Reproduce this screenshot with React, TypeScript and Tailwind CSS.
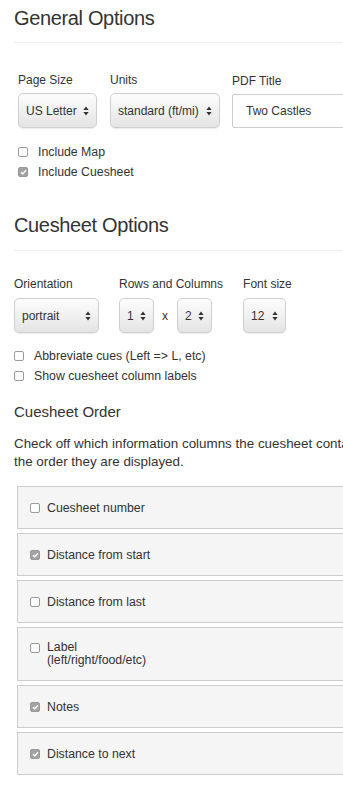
import React from "react";

const font = { fontFamily: '"Liberation Sans", Arial, sans-serif' };

function Arrows() {
  return (
    <svg width="6" height="10" viewBox="0 0 6 10" className="shrink-0">
      <path d="M3 0.5 L5.6 4 L0.4 4 Z" fill="#333" />
      <path d="M3 9.5 L5.6 6 L0.4 6 Z" fill="#333" />
    </svg>
  );
}

function Select({ value, width }: { value: string; width: string }) {
  return (
    <div
      className={`${width} h-[35px] rounded-[5px] border border-[#cfcfcf] bg-gradient-to-b from-[#fdfdfd] to-[#e4e4e4] shadow-[0_1px_1px_rgba(0,0,0,0.08)] flex items-center justify-between pl-[7px] pr-[7px] text-[12px] text-[#333]`}
    >
      <span className="whitespace-nowrap">{value}</span>
      <Arrows />
    </div>
  );
}

function Check({ checked }: { checked?: boolean }) {
  if (checked) {
    return (
      <span className="w-[10px] h-[10px] rounded-[2px] bg-[#a3a3a3] border border-[#999] flex items-center justify-center shrink-0">
        <svg width="7" height="6" viewBox="0 0 7 6">
          <path d="M1 3.2 L2.8 4.8 L6 1.2" stroke="#fff" strokeWidth="1.3" fill="none" />
        </svg>
      </span>
    );
  }
  return <span className="block w-[10px] h-[10px] rounded-[2px] bg-white border border-[#9a9a9a] shrink-0" />;
}

function CheckRow({ label, checked }: { label: string; checked?: boolean }) {
  return (
    <div className="flex items-center h-[20px] text-[12.3px] text-[#333]">
      <Check checked={checked} />
      <span className="ml-[10px] whitespace-nowrap">{label}</span>
    </div>
  );
}

function Item({ children, checked, tall }: { children: React.ReactNode; checked?: boolean; tall?: boolean }) {
  return (
    <div
      className={`${tall ? "h-[54px]" : "h-[43px]"} flex items-center border border-[#cccccc] bg-[#f5f5f5] pl-[12px] text-[12.3px] text-[#333]`}
    >
      <div className={`flex ${tall ? "items-start" : "items-center"}`}>
        <div className={tall ? "mt-[2px]" : ""}>
          <Check checked={checked} />
        </div>
        <div className={`ml-[7px] ${tall ? "leading-[13px]" : "leading-[14px]"}`}>{children}</div>
      </div>
    </div>
  );
}

export default function App() {
  return (
    <div className="w-[343px] h-[788px] overflow-hidden bg-white" style={font}>
      <div className="w-[420px] pl-[14px] pt-[6px]">
        <h1 className="text-[20px] leading-[24px] tracking-[-0.35px] text-[#333]">General Options</h1>
        <div className="mt-[12px] h-px bg-[#eeeeee]" />

        <div className="ml-[4px] mt-[30px] flex">
          <div className="flex flex-col">
            <div className="text-[12px] leading-[14px] text-[#333] h-[14px]">Page Size</div>
            <div className="mt-[6px]">
              <Select value="US Letter" width="w-[79px]" />
            </div>
          </div>
          <div className="flex flex-col ml-[13px]">
            <div className="text-[12px] leading-[14px] text-[#333] h-[14px]">Units</div>
            <div className="mt-[6px]">
              <Select value="standard (ft/mi)" width="w-[110px]" />
            </div>
          </div>
          <div className="flex flex-col ml-[12px]">
            <div className="text-[12px] leading-[14px] text-[#333] h-[14px] mt-[1px]">PDF Title</div>
            <div className="mt-[6px] w-[180px] h-[34px] border border-[#cccccc] rounded-[2px] bg-white flex items-center pl-[13px] text-[12px] text-[#333]">
              Two Castles
            </div>
          </div>
        </div>

        <div className="ml-[4px] mt-[14px] flex flex-col">
          <CheckRow label="Include Map" />
          <CheckRow label="Include Cuesheet" checked />
        </div>

        <h1 className="mt-[31px] text-[20px] leading-[24px] tracking-[-0.35px] text-[#333]">Cuesheet Options</h1>
        <div className="mt-[13px] h-px bg-[#eeeeee]" />

        <div className="mt-[26px] flex">
          <div className="flex flex-col">
            <div className="text-[12px] leading-[14px] text-[#333] h-[14px]">Orientation</div>
            <div className="mt-[7px]">
              <Select value="portrait" width="w-[85px]" />
            </div>
          </div>
          <div className="flex flex-col ml-[20px]">
            <div className="text-[12px] leading-[14px] text-[#333] h-[14px]">Rows and Columns</div>
            <div className="mt-[7px] flex items-center">
              <Select value="1" width="w-[35px]" />
              <span className="text-[12px] text-[#333] ml-[8px] mr-[9px]">x</span>
              <Select value="2" width="w-[35px]" />
            </div>
          </div>
          <div className="flex flex-col ml-[20px]">
            <div className="text-[12px] leading-[14px] text-[#333] h-[14px]">Font size</div>
            <div className="mt-[7px]">
              <Select value="12" width="w-[43px]" />
            </div>
          </div>
        </div>

        <div className="mt-[13px] flex flex-col">
          <CheckRow label="Abbreviate cues (Left => L, etc)" />
          <CheckRow label="Show cuesheet column labels" />
        </div>

        <h2 className="mt-[16px] text-[15px] leading-[20px] text-[#333]">Cuesheet Order</h2>

        <div className="mt-[13px] text-[13.4px] leading-[18px] text-[#333] whitespace-nowrap">
          <div>Check off which information columns the cuesheet contains, and</div>
          <div>the order they are displayed.</div>
        </div>

        <div className="mt-[15px] ml-[3px] flex flex-col gap-[4px]">
          <Item>Cuesheet number</Item>
          <Item checked>Distance from start</Item>
          <Item>Distance from last</Item>
          <Item tall>
            <div>Label</div>
            <div>(left/right/food/etc)</div>
          </Item>
          <Item checked>Notes</Item>
          <Item checked>Distance to next</Item>
        </div>
      </div>
    </div>
  );
}
